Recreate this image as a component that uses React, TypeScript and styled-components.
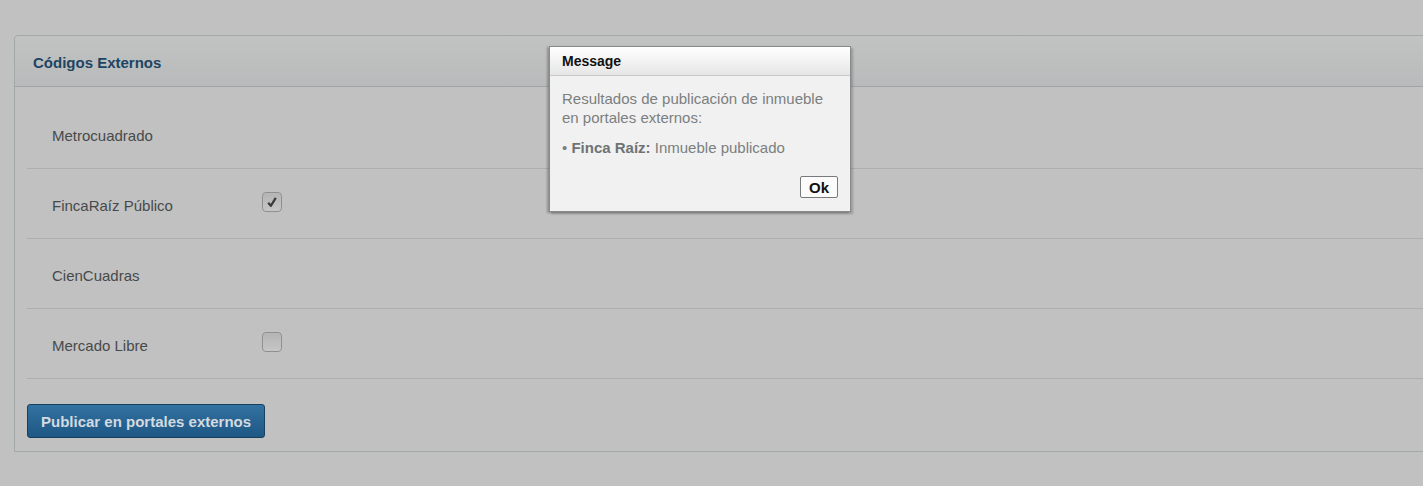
import React from 'react'
import styled, {createGlobalStyle} from 'styled-components'

const GlobalStyle = createGlobalStyle`
  html, body {
    margin: 0;
    padding: 0;
    background: #c1c1c1;
    overflow: hidden;
    font-family: "Liberation Sans", Arial, sans-serif;
  }
`

const Page = styled.div`
  position: relative;
  height: 486px;
  padding: 35px 0 0 14px;
  box-sizing: border-box;
`

const Panel = styled.section`
  margin-right: -20px;
  border: 1px solid #a3a8a8;
  border-radius: 4px 4px 0 0;
  background: #c1c1c1;
`

const PanelHeader = styled.header`
  height: 50px;
  display: flex;
  align-items: center;
  padding-left: 18px;
  background: linear-gradient(#c1c3c2, #b9babb);
  border-bottom: 1px solid #a0a6a6;
  border-radius: 4px 4px 0 0;
`

const PanelTitle = styled.h3`
  margin: 0;
  padding-top: 2px;
  font-size: 15px;
  font-weight: bold;
  color: #1d4563;
`

const PanelBody = styled.div`
  padding: 12px 0 13px 12px;
`

const Row = styled.div`
  display: flex;
  align-items: center;
  height: 69px;
  border-bottom: 1px solid #acafaf;
`

const Label = styled.span`
  width: 210px;
  padding: 4px 0 0 25px;
  font-size: 15px;
  color: #474a4b;
`

const Check = styled.span<{$checked?: boolean}>`
  width: 18px;
  height: 18px;
  margin-bottom: 4px;
  border: 1px solid #8e9090;
  border-radius: 4px;
  background: linear-gradient(#b4b4b4, #c6c6c6);
  display: flex;
  align-items: center;
  justify-content: center;
  box-shadow: inset 0 0 1px #d0d0d0;
`

const Actions = styled.div`
  padding-top: 25px;
`

const PublishButton = styled.button`
  height: 34px;
  padding: 0 13px;
  border: 1px solid #16405f;
  border-radius: 3px;
  background: linear-gradient(#3372a1, #1e5784);
  color: #d3dae0;
  font-family: "Liberation Sans", Arial, sans-serif;
  font-size: 15px;
  font-weight: bold;
  cursor: pointer;
`

const Dialog = styled.div`
  position: absolute;
  left: 549px;
  top: 46px;
  width: 300px;
  background: #f1f1f1;
  border: 1px solid #8a8a8a;
  box-shadow: -2px 1px 2px rgba(0, 0, 0, 0.25), 2px 2px 2px rgba(0, 0, 0, 0.2);
`

const DialogTitle = styled.div`
  height: 28px;
  display: flex;
  align-items: center;
  padding-left: 12px;
  background: linear-gradient(#ffffff, #e6e6e6);
  border-bottom: 1px solid #c9c9c9;
  font-size: 14px;
  font-weight: bold;
  color: #111;
`

const DialogBody = styled.div`
  padding: 13px 12px 13px 12px;
  color: #7b7f80;
  font-size: 15px;
  line-height: 19px;
`

const Paragraph = styled.p`
  margin: 0 0 11px;
`

const Strong = styled.b`
  color: #6e7374;
`

const DialogFooter = styled.div`
  display: flex;
  justify-content: flex-end;
  padding-top: 8px;
`

const OkButton = styled.button`
  height: 22px;
  padding: 0 8px;
  border: 1px solid #7a7a7a;
  border-radius: 2px;
  background: #fbfbfb;
  font-family: "Liberation Sans", Arial, sans-serif;
  font-size: 15px;
  font-weight: bold;
  color: #111;
`

const CheckMark = () => (
  <svg width="12" height="12" viewBox="0 0 12 12">
    <path d="M2.2 6.8 L4.8 9.8 L9.8 1.8" fill="none" stroke="#3a3a3a" strokeWidth="2.2" strokeLinejoin="round"/>
  </svg>
)

const portals = [
  {name: 'Metrocuadrado'},
  {name: 'FincaRaíz Público', check: true, checked: true},
  {name: 'CienCuadras'},
  {name: 'Mercado Libre', check: true, checked: false},
]

export default function App() {
  return (
    <Page>
      <GlobalStyle/>
      <Panel>
        <PanelHeader>
          <PanelTitle>Códigos Externos</PanelTitle>
        </PanelHeader>
        <PanelBody>
          {portals.map(p => (
            <Row key={p.name}>
              <Label>{p.name}</Label>
              {p.check && <Check $checked={p.checked}>{p.checked && <CheckMark/>}</Check>}
            </Row>
          ))}
          <Actions>
            <PublishButton>Publicar en portales externos</PublishButton>
          </Actions>
        </PanelBody>
      </Panel>

      <Dialog>
        <DialogTitle>Message</DialogTitle>
        <DialogBody>
          <Paragraph>Resultados de publicación de inmueble en portales externos:</Paragraph>
          <Paragraph>• <Strong>Finca Raíz:</Strong> Inmueble publicado</Paragraph>
          <DialogFooter>
            <OkButton>Ok</OkButton>
          </DialogFooter>
        </DialogBody>
      </Dialog>
    </Page>
  )
}
